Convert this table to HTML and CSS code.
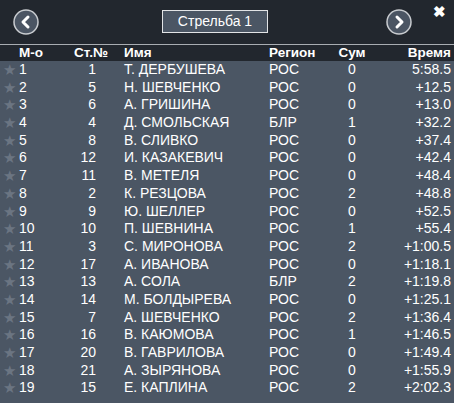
FILE: index.html
```html
<!DOCTYPE html>
<html>
<head>
<meta charset="utf-8">
<link rel="stylesheet" href="styles.css">
</head>
<body>
<div class="panel">
  <div class="topbar">
    <button class="nav"><svg width="26" height="26" viewBox="0 0 26 26"><circle cx="13" cy="13" r="12" fill="#4b5563" stroke="#c9ccd0" stroke-width="1.5"/><path d="M15 8 L10 13 L15 18" fill="none" stroke="#fff" stroke-width="3" stroke-linecap="round" stroke-linejoin="round"/></svg></button>
    <div class="title">Стрельба 1</div>
    <button class="nav"><svg width="26" height="26" viewBox="0 0 26 26"><circle cx="13" cy="13" r="12" fill="#4b5563" stroke="#c9ccd0" stroke-width="1.5"/><path d="M11 8 L16 13 L11 18" fill="none" stroke="#fff" stroke-width="3" stroke-linecap="round" stroke-linejoin="round"/></svg></button>
    <div class="close">✖</div>
  </div>
  <div class="row head">
    <span class="c-rank">М-о</span><span class="c-no">Ст.№</span><span class="c-name">Имя</span><span class="c-reg">Регион</span><span class="c-sum">Сум</span><span class="c-time">Время</span>
  </div>
  <div class="rows" id="rows"></div>
</div>
<script src="app.js"></script>
</body>
</html>
```
FILE: app.js
```js
var data = [
["1","1","Т. ДЕРБУШЕВА","РОС","0","5:58.5"],
["2","5","Н. ШЕВЧЕНКО","РОС","0","+12.5"],
["3","6","А. ГРИШИНА","РОС","0","+13.0"],
["4","4","Д. СМОЛЬСКАЯ","БЛР","1","+32.2"],
["5","8","В. СЛИВКО","РОС","0","+37.4"],
["6","12","И. КАЗАКЕВИЧ","РОС","0","+42.4"],
["7","11","В. МЕТЕЛЯ","РОС","0","+48.4"],
["8","2","К. РЕЗЦОВА","РОС","2","+48.8"],
["9","9","Ю. ШЕЛЛЕР","РОС","0","+52.5"],
["10","10","П. ШЕВНИНА","РОС","1","+55.4"],
["11","3","С. МИРОНОВА","РОС","2","+1:00.5"],
["12","17","А. ИВАНОВА","РОС","0","+1:18.1"],
["13","13","А. СОЛА","БЛР","2","+1:19.8"],
["14","14","М. БОЛДЫРЕВА","РОС","0","+1:25.1"],
["15","7","А. ШЕВЧЕНКО","РОС","2","+1:36.4"],
["16","16","В. КАЮМОВА","РОС","1","+1:46.5"],
["17","20","В. ГАВРИЛОВА","РОС","0","+1:49.4"],
["18","21","А. ЗЫРЯНОВА","РОС","0","+1:55.9"],
["19","15","Е. КАПЛИНА","РОС","2","+2:02.3"]
];
var html = "";
data.forEach(function(r){
  html += '<div class="row"><span class="c-rank"><span class="star">★</span>' + r[0] + '</span><span class="c-no">' + r[1] + '</span><span class="c-name">' + r[2] + '</span><span class="c-reg">' + r[3] + '</span><span class="c-sum">' + r[4] + '</span><span class="c-time">' + r[5] + '</span></div>';
});
document.getElementById("rows").innerHTML = html;
```
FILE: styles.css
```css
html, body {
  margin: 0;
  padding: 0;
  background: #4b5664;
}
body {
  font-family: "Liberation Sans", Arial, sans-serif;
  color: #fff;
}
.panel {
  width: 454px;
  height: 403px;
  background: #4b5664;
  overflow: hidden;
}
.topbar {
  position: relative;
  background: #22272e;
  border-bottom: 1px solid #a9adb2;
  display: flex;
  align-items: center;
  box-sizing: border-box;
  height: 45px;
  padding: 0 0 0 13px;
}
.nav {
  background: none;
  border: 0;
  padding: 0;
  margin: 0;
  width: 26px;
  height: 26px;
  display: block;
}
.title {
  margin-left: 123px;
  margin-right: 118px;
  width: 106px;
  height: 23px;
  box-sizing: border-box;
  border: 1px solid #e2e4e6;
  background: #4b5664;
  font-size: 14px;
  line-height: 21px;
  text-align: center;
  margin-top: -1px;
}
.close {
  position: absolute;
  right: 8px;
  top: 3px;
  font-size: 15px;
  font-weight: bold;
  color: #fff;
}
.row {
  display: flex;
  height: 17.7px;
  line-height: 17.7px;
  font-size: 14px;
  white-space: nowrap;
}
.row.head {
  background: #22272e;
  height: 16px;
  line-height: 16px;
  font-weight: bold;
  font-size: 13.5px;
}
.c-rank {
  width: 60px;
  padding-left: 19px;
  box-sizing: border-box;
  position: relative;
}
.star {
  position: absolute;
  left: 3px;
  top: 0;
  color: #6b7582;
  font-size: 15px;
}
.c-no {
  width: 36px;
  box-sizing: border-box;
  text-align: right;
}
.head .c-no {
  text-align: left;
  padding-left: 14px;
  overflow: visible;
}
.c-name {
  width: 145px;
  margin-left: 28px;
}
.c-reg {
  width: 68px;
}
.c-sum {
  width: 30px;
  text-align: center;
}
.c-time {
  flex: 1;
  text-align: right;
  padding-right: 3px;
}
```
